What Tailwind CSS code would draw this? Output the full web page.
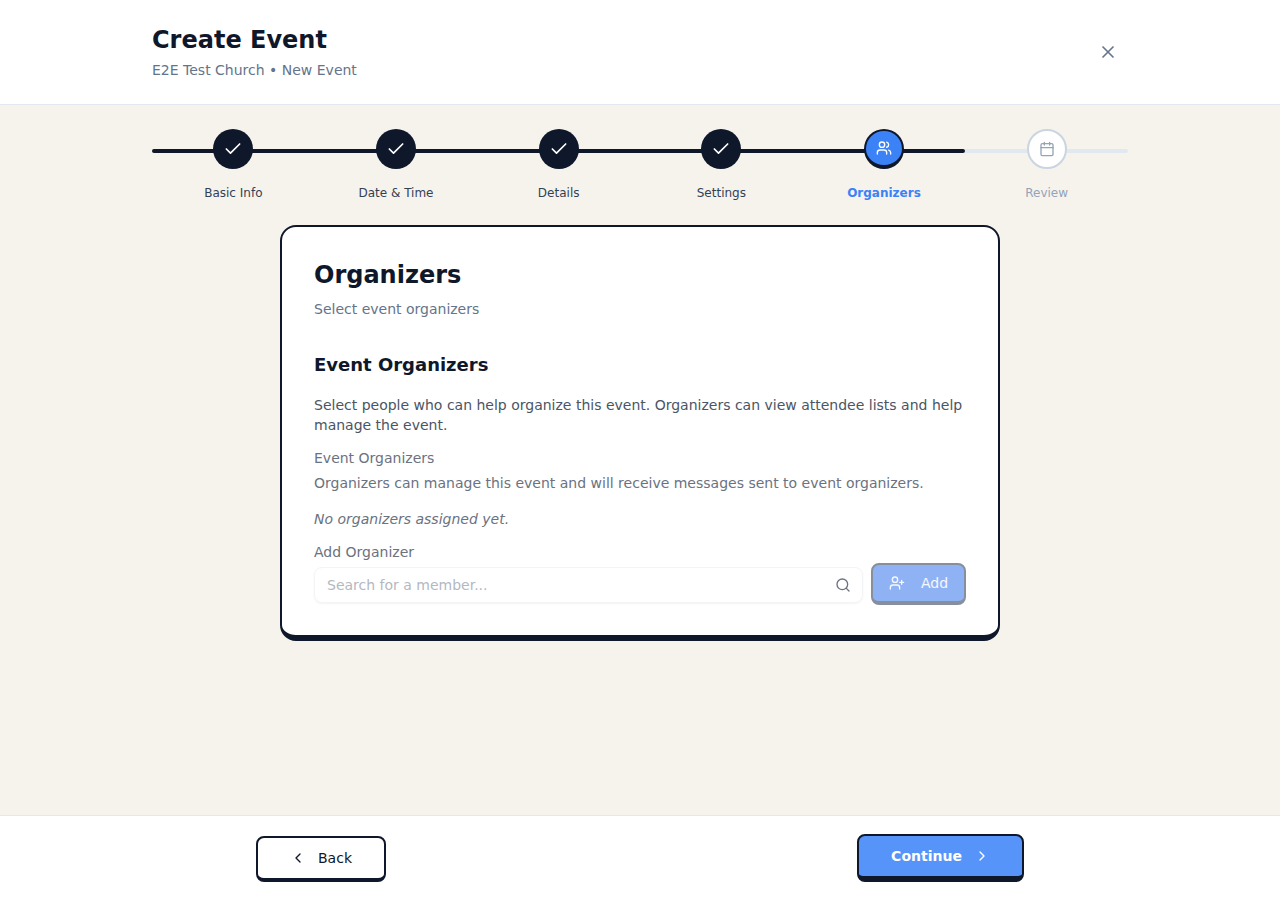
<!DOCTYPE html>
<html><head><script src="https://cdn.jsdelivr.net/npm/@tailwindcss/browser@4"></script></head>
<body class="bg-[#f6f3ed] font-['DejaVu_Sans',sans-serif]">
<div class="h-[900px] flex flex-col overflow-hidden">
<header class="h-[105px] bg-white border-b border-[#e2e8f0] shrink-0">
<div class="w-[976px] mx-auto flex justify-between items-center h-[104px]">
<div><h1 class="text-[24px] leading-[32px] font-bold text-[#0f172a]">Create Event</h1><p class="text-[14px] leading-[20px] mt-[4px] text-[#64748b]">E2E Test Church • New Event</p></div>
<svg class="w-5 h-5 mr-[10px] text-[#64748b]" viewBox="0 0 24 24" fill="none" stroke="currentColor" stroke-width="2" stroke-linecap="round"><path d="M18 6 6 18M6 6l12 12"/></svg>
</div></header>
<main class="flex-1 flex flex-col items-center pt-[24px]">
<div class="w-[976px] grid grid-cols-6 h-[96px]">
<div class="flex flex-col items-center relative"><div class="absolute top-[20px] left-0 right-0 h-1 bg-[#0f172a] rounded-l-full"></div><div class="relative w-10 h-10 rounded-full bg-[#0f172a] flex items-center justify-center"><svg class="w-5 h-5 text-white" viewBox="0 0 24 24" fill="none" stroke="currentColor" stroke-width="2" stroke-linecap="round" stroke-linejoin="round"><path d="M20 6 9 17l-5-5"/></svg></div><span class="mt-4 text-[12px] leading-[16px] text-[#334155]">Basic Info</span></div>
<div class="flex flex-col items-center relative"><div class="absolute top-[20px] left-0 right-0 h-1 bg-[#0f172a]"></div><div class="relative w-10 h-10 rounded-full bg-[#0f172a] flex items-center justify-center"><svg class="w-5 h-5 text-white" viewBox="0 0 24 24" fill="none" stroke="currentColor" stroke-width="2" stroke-linecap="round" stroke-linejoin="round"><path d="M20 6 9 17l-5-5"/></svg></div><span class="mt-4 text-[12px] leading-[16px] text-[#334155]">Date &amp; Time</span></div>
<div class="flex flex-col items-center relative"><div class="absolute top-[20px] left-0 right-0 h-1 bg-[#0f172a]"></div><div class="relative w-10 h-10 rounded-full bg-[#0f172a] flex items-center justify-center"><svg class="w-5 h-5 text-white" viewBox="0 0 24 24" fill="none" stroke="currentColor" stroke-width="2" stroke-linecap="round" stroke-linejoin="round"><path d="M20 6 9 17l-5-5"/></svg></div><span class="mt-4 text-[12px] leading-[16px] text-[#334155]">Details</span></div>
<div class="flex flex-col items-center relative"><div class="absolute top-[20px] left-0 right-0 h-1 bg-[#0f172a]"></div><div class="relative w-10 h-10 rounded-full bg-[#0f172a] flex items-center justify-center"><svg class="w-5 h-5 text-white" viewBox="0 0 24 24" fill="none" stroke="currentColor" stroke-width="2" stroke-linecap="round" stroke-linejoin="round"><path d="M20 6 9 17l-5-5"/></svg></div><span class="mt-4 text-[12px] leading-[16px] text-[#334155]">Settings</span></div>
<div class="flex flex-col items-center relative"><div class="absolute top-[20px] left-0 right-0 h-1 bg-[#0f172a] rounded-r-full"></div><div class="relative w-10 h-10 rounded-full bg-[#3b82f6] border-2 border-[#0f172a] border-b-4 flex items-center justify-center"><svg class="w-4 h-4 text-white" viewBox="0 0 24 24" fill="none" stroke="currentColor" stroke-width="2" stroke-linecap="round" stroke-linejoin="round"><path d="M16 21v-2a4 4 0 0 0-4-4H6a4 4 0 0 0-4 4v2"/><circle cx="9" cy="7" r="4"/><path d="M22 21v-2a4 4 0 0 0-3-3.87M16 3.13a4 4 0 0 1 0 7.75"/></svg></div><span class="mt-4 text-[12px] leading-[16px] font-bold text-[#3b82f6]">Organizers</span></div>
<div class="flex flex-col items-center relative"><div class="absolute top-[20px] left-0 right-0 h-1 bg-[#e2e8f0] rounded-r-full"></div><div class="relative w-10 h-10 rounded-full bg-white border-2 border-[#cbd5e1] flex items-center justify-center"><svg class="w-4 h-4 text-[#94a3b8]" viewBox="0 0 24 24" fill="none" stroke="currentColor" stroke-width="2" stroke-linecap="round" stroke-linejoin="round"><path d="M8 2v4M16 2v4"/><rect x="3" y="4" width="18" height="18" rx="2"/><path d="M3 10h18"/></svg></div><span class="mt-4 text-[12px] leading-[16px] text-[#94a3b8]">Review</span></div>
</div>
<section class="w-[720px] h-[416px] bg-white border-2 border-[#0f172a] border-b-[6px] rounded-[16px] px-8 pt-8">
<h2 class="text-[24px] leading-[32px] font-bold text-[#0f172a]">Organizers</h2>
<p class="mt-[8px] text-[14px] leading-[20px] text-[#64748b]">Select event organizers</p>
<h3 class="mt-[32px] text-[18px] leading-[28px] font-bold text-[#0f172a]">Event Organizers</h3>
<p class="mt-[16px] text-[14px] leading-[20px] text-[#4b5563]">Select people who can help organize this event. Organizers can view attendee lists and help manage the event.</p>
<p class="mt-[13px] text-[14px] leading-[20px] text-[#6b7280]">Event Organizers</p>
<p class="mt-[5px] text-[14px] leading-[20px] text-[#6b7280]">Organizers can manage this event and will receive messages sent to event organizers.</p>
<p class="mt-[16px] text-[14px] leading-[20px] italic text-[#6b7280]">No organizers assigned yet.</p>
<p class="mt-[13px] text-[14px] leading-[20px] text-[#6b7280]">Add Organizer</p>
<div class="flex gap-2 items-start">
<div class="mt-[5px] w-[549px] h-[36px] rounded-lg border border-[#f3f4f6] shadow-xs flex items-center justify-between px-3"><span class="text-[14px] text-[#b4b8bf]">Search for a member...</span><svg class="w-4 h-4 text-[#6b7280] translate-x-[1px]" viewBox="0 0 24 24" fill="none" stroke="currentColor" stroke-width="2" stroke-linecap="round" stroke-linejoin="round"><circle cx="11" cy="11" r="8"/><path d="m21 21-4.3-4.3"/></svg></div>
<button class="mt-px w-[95px] h-[42px] rounded-lg bg-[#8fb2f5] border-2 border-[#878f9c] border-b-4 flex items-center justify-center gap-[16px] text-[14px] text-white/90"><svg class="w-4 h-4" viewBox="0 0 24 24" fill="none" stroke="currentColor" stroke-width="2" stroke-linecap="round" stroke-linejoin="round"><path d="M16 21v-2a4 4 0 0 0-4-4H6a4 4 0 0 0-4 4v2"/><circle cx="9" cy="7" r="4"/><path d="M19 8v6M22 11h-6"/></svg>Add</button>
</div>
</section>
</main>
<footer class="h-[85px] bg-white border-t border-[#e2e8f0] shrink-0 relative">
<div class="w-[768px] mx-auto flex justify-between items-start pt-[20px]">
<button class="w-[130px] h-[46px] rounded-lg bg-white border-2 border-[#0f172a] border-b-4 flex items-center justify-center gap-3 text-[14px] text-[#0f172a]"><svg class="w-4 h-4" viewBox="0 0 24 24" fill="none" stroke="currentColor" stroke-width="2" stroke-linecap="round" stroke-linejoin="round"><path d="m15 18-6-6 6-6"/></svg>Back</button>
<button class="w-[167px] h-[48px] -mt-[2px] rounded-lg bg-[#5794fa] border-2 border-[#0f172a] border-b-[6px] flex items-center justify-center gap-3 text-[14px] font-bold text-white">Continue<svg class="w-4 h-4" viewBox="0 0 24 24" fill="none" stroke="currentColor" stroke-width="2" stroke-linecap="round" stroke-linejoin="round"><path d="m9 18 6-6-6-6"/></svg></button>
</div>
</footer>
</div>
</body></html>
